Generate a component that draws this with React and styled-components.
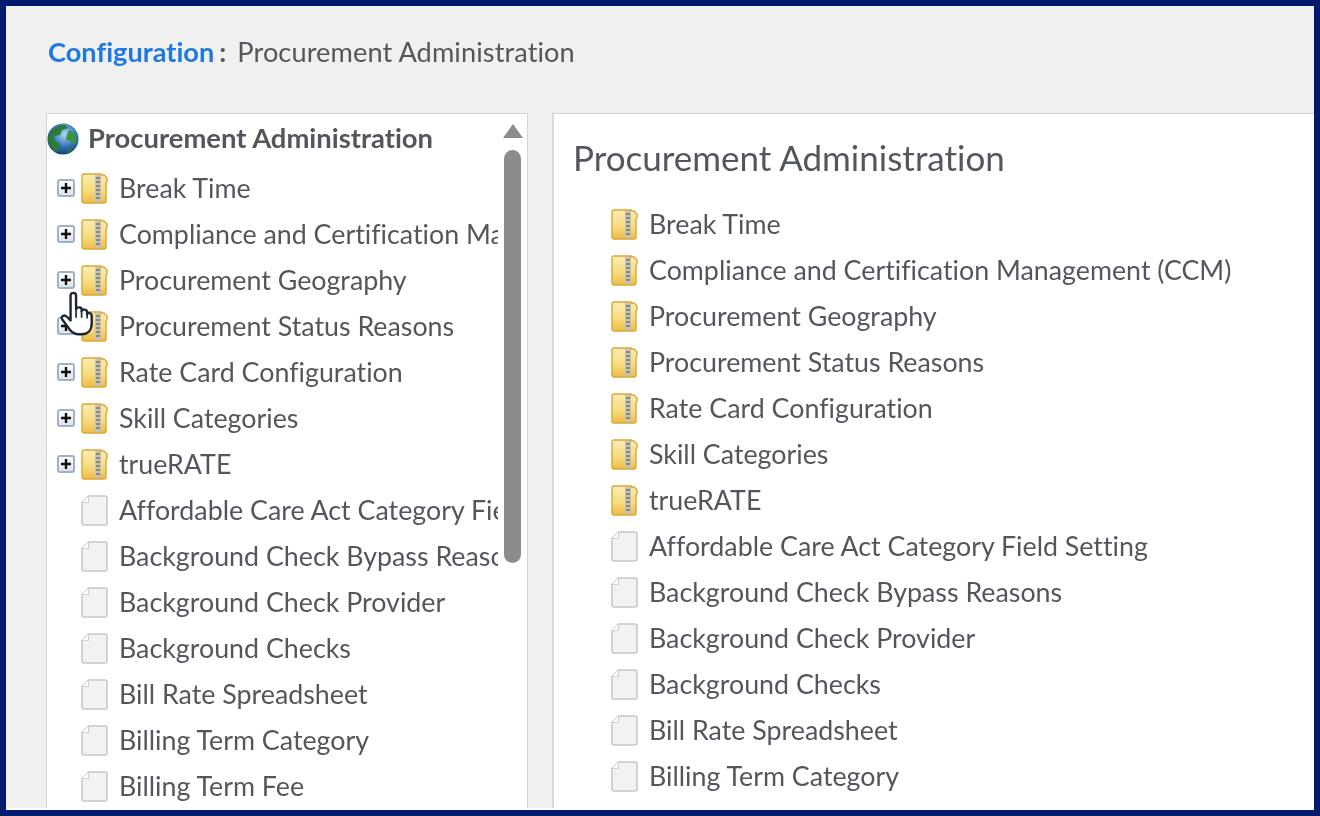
import React from "react";
import styled, { createGlobalStyle } from "styled-components";

const folders = [
  "Break Time",
  "Compliance and Certification Management (CCM)",
  "Procurement Geography",
  "Procurement Status Reasons",
  "Rate Card Configuration",
  "Skill Categories",
  "trueRATE",
];

const treePages = [
  "Affordable Care Act Category Field Setting",
  "Background Check Bypass Reasons",
  "Background Check Provider",
  "Background Checks",
  "Bill Rate Spreadsheet",
  "Billing Term Category",
  "Billing Term Fee",
];

const GlobalStyle = createGlobalStyle`
  html, body {
    margin: 0;
    padding: 0;
    overflow: hidden;
    background: #001a6e;
  }
`;

const Frame = styled.div`
  box-sizing: border-box;
  width: 1320px;
  height: 816px;
  border: 6px solid #001a6e;
  background: #f0f0f0;
  display: flex;
  flex-direction: column;
  overflow: hidden;
  font-family: Lato, "Open Sans", sans-serif;
  font-variant-ligatures: none;
  color: #53575d;
  filter: blur(0.4px);
`;

const Header = styled.div`
  height: 107px;
  flex: none;
  box-sizing: border-box;
  padding: 29px 0 0 42px;
  font-size: 27.2px;
  line-height: 34px;
  display: flex;
`;

const Crumb = styled.span`
  color: #1f7ae0;
  font-weight: 700;
`;

const Colon = styled.span`
  font-weight: 700;
  margin: 0 11px 0 5px;
`;

const HeaderText = styled.span`
  letter-spacing: 0.08px;
`;

const Body = styled.div`
  flex: 1;
  min-height: 0;
  display: flex;
  padding-left: 40px;
  gap: 24px;
  border-bottom: 2px solid #fff;
`;

const TreePanel = styled.div`
  position: relative;
  width: 482px;
  flex: none;
  box-sizing: border-box;
  background: #fff;
  border: 1px solid #d4d4d4;
  border-bottom: none;
  display: flex;
  overflow: hidden;
`;

const TreeList = styled.div`
  width: 451px;
  flex: none;
  overflow: hidden;
`;

const Scrollbar = styled.div`
  flex: 1;
  display: flex;
  flex-direction: column;
  align-items: center;
  padding: 10px 0 0 0;
`;

const ScrollArrow = styled.div`
  width: 0;
  height: 0;
  border-left: 10px solid transparent;
  border-right: 10px solid transparent;
  border-bottom: 14px solid #8c8c8c;
  margin-bottom: 12px;
`;

const ScrollThumb = styled.div`
  width: 17px;
  height: 413px;
  border-radius: 9px;
  background: #8c8c8c;
`;

const TreeRoot = styled.div`
  height: 51px;
  padding-bottom: 1px;
  box-sizing: border-box;
  display: flex;
  align-items: center;
  white-space: nowrap;
  gap: 9px;
`;

const RootLabel = styled.span`
  font-size: 27.4px;
  font-weight: 700;
  padding-bottom: 4px;
`;

const Row = styled.div`
  height: 46px;
  display: flex;
  align-items: center;
  white-space: nowrap;
  font-size: 26.8px;
  padding-left: ${(p) => p.$indent}px;
`;

const Label = styled.span`
  margin-left: 11px;
`;

const Expander = styled.span`
  box-sizing: border-box;
  width: 18px;
  height: 18px;
  margin-right: 6px;
  flex: none;
  border: 2px solid #9db2c8;
  border-radius: 3px;
  background: linear-gradient(#fff, #dfe3e8);
  display: flex;
  align-items: center;
  justify-content: center;
`;

const Content = styled.div`
  flex: 1;
  background: #fff;
  border-top: 1px solid #d4d4d4;
  border-left: 2px solid #d8d8d8;
  overflow: hidden;
  box-sizing: border-box;
  padding-top: 22px;
`;

const ContentTitle = styled.h1`
  margin: 0 0 23px 19px;
  height: 42px;
  font-size: 35px;
  line-height: 42px;
  font-weight: 400;
`;

const RowIcon = styled.svg`
  flex: none;
`;

const Cursor = styled.svg`
  position: absolute;
  left: 12px;
  top: 177px;
`;

const PlusIcon = () => (
  <svg width="10" height="10" viewBox="0 0 10 10">
    <path d="M5 0v10M0 5h10" stroke="#111" strokeWidth="2.4" />
  </svg>
);

const Globe = () => (
  <svg width="32" height="32" viewBox="0 0 32 32" style={{ flex: "none" }}>
    <defs>
      <radialGradient id="sea" cx="0.55" cy="0.35" r="0.75">
        <stop offset="0" stopColor="#a9d8f5" />
        <stop offset="0.55" stopColor="#2f6fb5" />
        <stop offset="1" stopColor="#0c2a66" />
      </radialGradient>
    </defs>
    <circle cx="16" cy="16" r="15.5" fill="url(#sea)" />
    <path d="M5 8c3-4 8-6 13-6l3 3-6 2-2 5-6 1 1 5 5 3-1 5-3 3C6 27 1 21 1 15z" fill="#2c7d32" />
    <path d="M22 7l6 3 2 7-3 5-3-4-5-1 1-5z" fill="#3c9240" />
    <path d="M24 24l3-1-5 7-3 0z" fill="#2c7d32" />
  </svg>
);

const FolderIcon = () => (
  <RowIcon width="27" height="31" viewBox="0 0 27 31">
    <defs>
      <linearGradient id="zip" x1="0" y1="0" x2="0" y2="1">
        <stop offset="0" stopColor="#f9edb4" />
        <stop offset="0.6" stopColor="#f6da7c" />
        <stop offset="1" stopColor="#ecbb45" />
      </linearGradient>
    </defs>
    <path
      d="M3 1h17v1h3l3 3v4l-1 1v18a2 2 0 0 1-2 2H3a2 2 0 0 1-2-2V3a2 2 0 0 1 2-2z"
      fill="url(#zip)"
      stroke="#dba636"
      strokeWidth="1.4"
    />
    <rect x="14" y="2" width="6" height="27" fill="#c4c2b4" />
    <path d="M15 5h4M15 9h4M15 13h4M15 17h4M15 21h4M15 25h4" stroke="#77776f" strokeWidth="1.5" />
  </RowIcon>
);

const PageIcon = () => (
  <RowIcon width="27" height="31" viewBox="0 0 27 31">
    <path
      d="M7.5 1H24a2 2 0 0 1 2 2v25a2 2 0 0 1-2 2H3a2 2 0 0 1-2-2V7.5z"
      fill="#f2f2f2"
      stroke="#c8c8c8"
      strokeWidth="1.6"
    />
    <path d="M7.5 1v6.5H1" fill="#fff" stroke="#d0d0d0" strokeWidth="1.2" />
  </RowIcon>
);

const HandCursor = () => (
  <Cursor width="36" height="46" viewBox="0 0 38 50">
    <path
      d="M12 5c0-4 6-4 6 0v15c1-3 6-3 6 0v2c1-3 6-2 6 1v2c1-2 5-1 5 2v8c0 7-4 12-11 12h-4c-5 0-8-3-11-8L3 31c-2-3 2-6 5-3l4 4z"
      fill="#fff"
      stroke="#1d2530"
      strokeWidth="2.6"
      strokeLinejoin="round"
    />
    <path d="M18 20v9M24 22v7M30 25v5" stroke="#1d2530" strokeWidth="1.8" fill="none" />
  </Cursor>
);

const App = () => {
  return (
    <>
      <GlobalStyle />
      <Frame>
        <Header>
          <Crumb>Configuration</Crumb>
          <Colon>:</Colon>
          <HeaderText>Procurement Administration</HeaderText>
        </Header>
        <Body>
          <TreePanel>
            <TreeList>
              <TreeRoot>
                <Globe />
                <RootLabel>Procurement Administration</RootLabel>
              </TreeRoot>
              {folders.map((name) => (
                <Row key={name} $indent={10}>
                  <Expander>
                    <PlusIcon />
                  </Expander>
                  <FolderIcon />
                  <Label>{name}</Label>
                </Row>
              ))}
              {treePages.map((name) => (
                <Row key={name} $indent={34}>
                  <PageIcon />
                  <Label>{name}</Label>
                </Row>
              ))}
            </TreeList>
            <Scrollbar>
              <ScrollArrow />
              <ScrollThumb />
            </Scrollbar>
            <HandCursor />
          </TreePanel>
          <Content>
            <ContentTitle>Procurement Administration</ContentTitle>
            {folders.map((name) => (
              <Row key={name} $indent={57}>
                <FolderIcon />
                <Label>{name}</Label>
              </Row>
            ))}
            {treePages.slice(0, 6).map((name) => (
              <Row key={name} $indent={57}>
                <PageIcon />
                <Label>{name}</Label>
              </Row>
            ))}
          </Content>
        </Body>
      </Frame>
    </>
  );
};

export default App;
